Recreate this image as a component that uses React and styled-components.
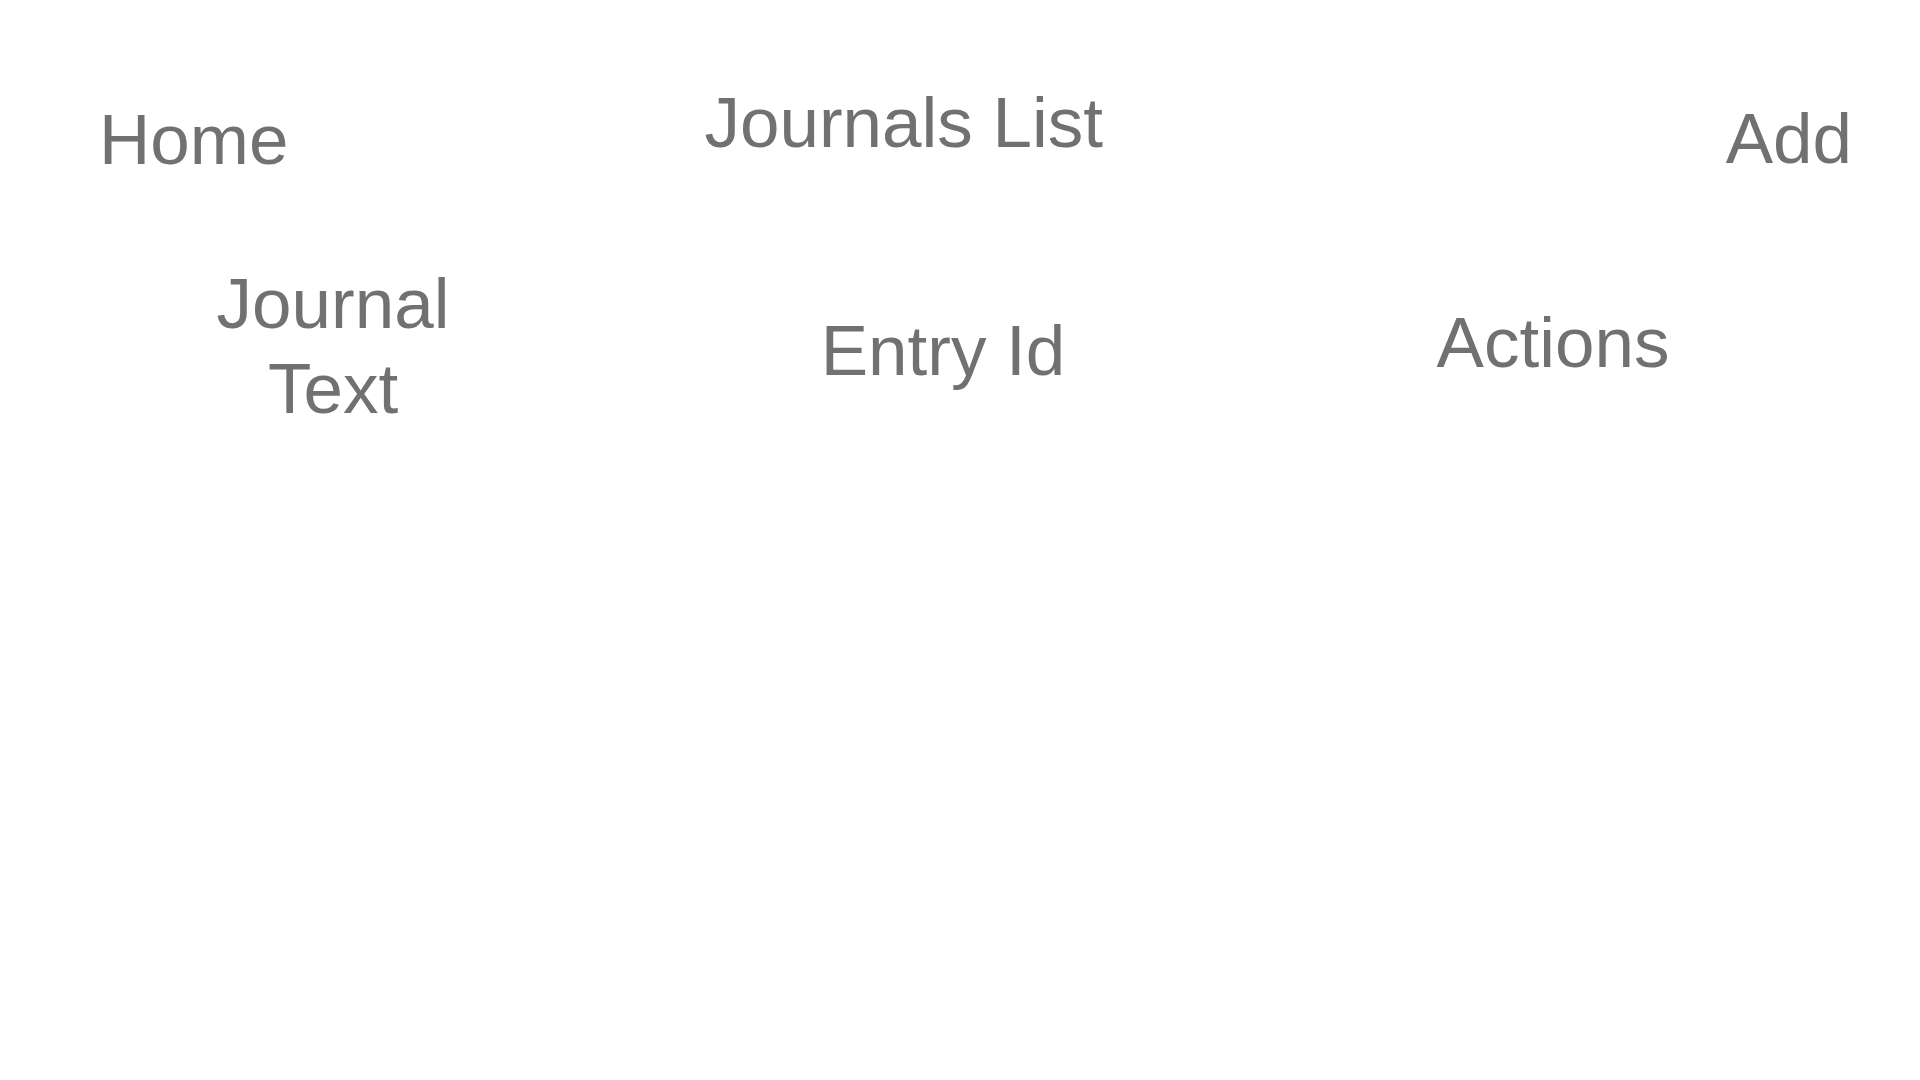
import React from "react";
import styled, { createGlobalStyle } from "styled-components";

const GlobalStyle = createGlobalStyle`
  html, body {
    margin: 0;
    padding: 0;
    background: #ffffff;
  }
  body {
    font-family: "Liberation Sans", Arial, Helvetica, sans-serif;
    color: #717171;
  }
`;

const Page = styled.div`
  width: 1920px;
  min-height: 1080px;
  background: #ffffff;
`;

const Header = styled.header`
  display: flex;
  align-items: flex-start;
  padding: 81px 68px 0 99px;
`;

const NavButton = styled.button`
  background: transparent;
  border: none;
  padding: 0;
  margin-top: ${(props) => props.offset || 0}px;
  margin-left: ${(props) => (props.right ? "auto" : "0")};
  font-family: inherit;
  font-size: 71px;
  line-height: 84px;
  color: #717171;
  cursor: pointer;
`;

const Title = styled.h1`
  margin: 0 0 0 416px;
  font-size: 71px;
  font-weight: 400;
  line-height: 84px;
  color: #717171;
`;

const TableHead = styled.div`
  display: grid;
  grid-template-columns: repeat(3, 610px);
  margin-top: 79px;
  padding-left: 28px;
`;

const HeadCell = styled.div`
  justify-self: center;
  align-self: start;
  margin-top: ${(props) => props.offset || 0}px;
  max-width: ${(props) => (props.narrow ? "300px" : "none")};
  font-size: 71px;
  line-height: 85px;
  text-align: center;
  color: #717171;
`;

const App = () => {
  return (
    <Page>
      <GlobalStyle />
      <Header>
        <NavButton offset={17}>Home</NavButton>
        <Title>Journals List</Title>
        <NavButton right offset={16}>
          Add
        </NavButton>
      </Header>
      <TableHead>
        <HeadCell narrow>Journal Text</HeadCell>
        <HeadCell offset={47}>Entry Id</HeadCell>
        <HeadCell offset={39}>Actions</HeadCell>
      </TableHead>
    </Page>
  );
};

export default App;
